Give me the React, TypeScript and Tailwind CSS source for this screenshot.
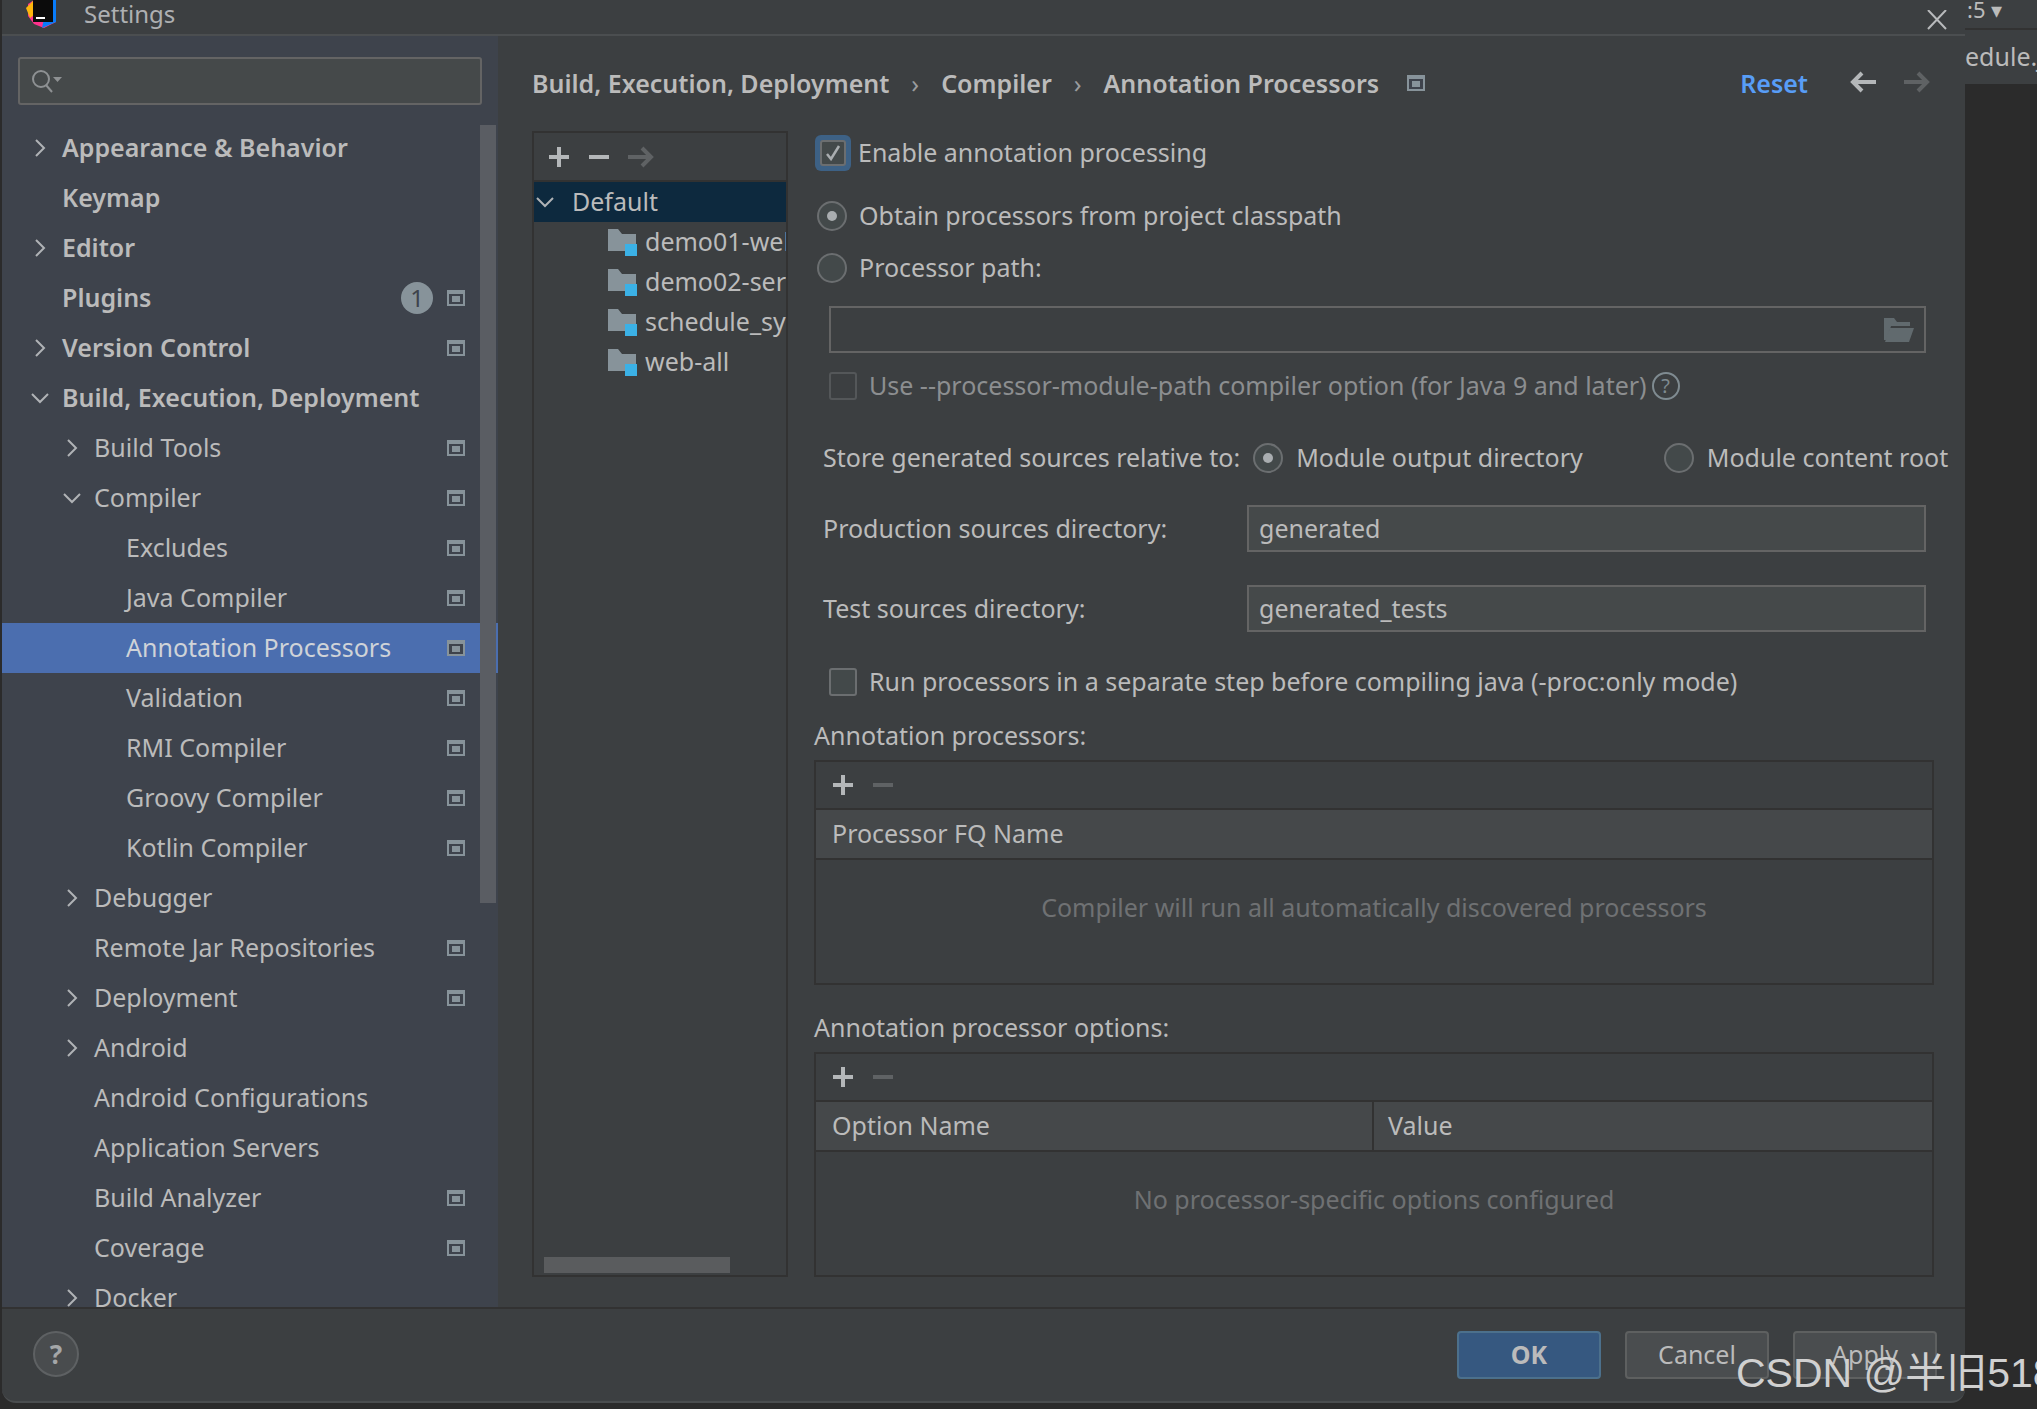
import React from "react";

const font = { fontFamily: '"Noto Sans", "Open Sans", sans-serif' };

function Cfg() {
  return (
    <svg width="18" height="16" viewBox="0 0 18 16" className="shrink-0">
      <rect x="0" y="0" width="18" height="16" fill="#87939a" />
      <rect x="2" y="4" width="14" height="10" fill="#3e434c" />
      <rect x="5" y="6" width="8" height="6" fill="#87939a" />
    </svg>
  );
}

function Chevron({ open }: { open?: boolean }) {
  return (
    <svg width="20" height="20" viewBox="0 0 20 20" fill="none" stroke="#b0b3b6" strokeWidth="2">
      {open ? <path d="M2 6 L10 14 L18 6" /> : <path d="M6 2 L14 10 L6 18" />}
    </svg>
  );
}

type Item = { t: string; d: number; bold?: boolean; c?: "o" | "c"; cfg?: boolean; badge?: boolean; sel?: boolean };
const items: Item[] = [
  { t: "Appearance & Behavior", d: 0, bold: true, c: "c" },
  { t: "Keymap", d: 0, bold: true },
  { t: "Editor", d: 0, bold: true, c: "c" },
  { t: "Plugins", d: 0, bold: true, cfg: true, badge: true },
  { t: "Version Control", d: 0, bold: true, c: "c", cfg: true },
  { t: "Build, Execution, Deployment", d: 0, bold: true, c: "o" },
  { t: "Build Tools", d: 1, c: "c", cfg: true },
  { t: "Compiler", d: 1, c: "o", cfg: true },
  { t: "Excludes", d: 2, cfg: true },
  { t: "Java Compiler", d: 2, cfg: true },
  { t: "Annotation Processors", d: 2, cfg: true, sel: true },
  { t: "Validation", d: 2, cfg: true },
  { t: "RMI Compiler", d: 2, cfg: true },
  { t: "Groovy Compiler", d: 2, cfg: true },
  { t: "Kotlin Compiler", d: 2, cfg: true },
  { t: "Debugger", d: 1, c: "c" },
  { t: "Remote Jar Repositories", d: 1, cfg: true },
  { t: "Deployment", d: 1, c: "c", cfg: true },
  { t: "Android", d: 1, c: "c" },
  { t: "Android Configurations", d: 1 },
  { t: "Application Servers", d: 1 },
  { t: "Build Analyzer", d: 1, cfg: true },
  { t: "Coverage", d: 1, cfg: true },
  { t: "Docker", d: 1, c: "c" },
];

function SideRow({ it }: { it: Item }) {
  const pl = it.d === 0 ? "pl-[60px]" : it.d === 1 ? "pl-[92px]" : "pl-[124px]";
  const cl = it.d === 0 ? "left-[28px]" : "left-[60px]";
  return (
    <div className={`relative flex h-[50px] shrink-0 items-center pr-[33px] ${pl} ${it.sel ? "bg-[#4b6eaf] text-[#cfd3d8]" : ""}`}>
      {it.c && (
        <span className={`absolute top-[15px] ${cl}`}>
          <Chevron open={it.c === "o"} />
        </span>
      )}
      <span className={`flex-1 text-[25px] ${it.bold ? "font-semibold" : ""}`}>{it.t}</span>
      {it.badge && (
        <span className="mr-[14px] flex h-[32px] w-[32px] items-center justify-center rounded-full bg-[#87939a] text-[24px] text-[#3e434c]">1</span>
      )}
      {it.cfg && <Cfg />}
    </div>
  );
}

function Plus({ c = "#b4b7b9" }: { c?: string }) {
  return (
    <svg width="22" height="22" viewBox="0 0 22 22" stroke={c} strokeWidth="4">
      <path d="M11 1 V21 M1 11 H21" />
    </svg>
  );
}
function Minus({ c = "#b4b7b9" }: { c?: string }) {
  return (
    <svg width="22" height="22" viewBox="0 0 22 22" stroke={c} strokeWidth="4">
      <path d="M1 11 H21" />
    </svg>
  );
}
function Arrow({ c, left }: { c: string; left?: boolean }) {
  return (
    <svg width="26" height="22" viewBox="0 0 26 22" fill="none" stroke={c} strokeWidth="4" className={left ? "" : "rotate-180"}>
      <path d="M12 2 L3 11 L12 20 M3 11 H26" />
    </svg>
  );
}

function Folder() {
  return (
    <svg width="31" height="29" viewBox="0 0 31 29" className="shrink-0">
      <path d="M0 1 H10 L14 6 H28 V23 H0 Z" fill="#87939a" />
      <rect x="17" y="16" width="12" height="12" fill="#3bb1e6" stroke="#3c3f41" strokeWidth="0" />
    </svg>
  );
}

function Radio({ on }: { on?: boolean }) {
  return (
    <span className="flex h-[30px] w-[30px] shrink-0 items-center justify-center rounded-full border-2 border-[#6b6e70] bg-[#43494a]">
      {on && <span className="h-[10px] w-[10px] rounded-full bg-[#a9adb0]" />}
    </span>
  );
}

function Box({ dim }: { dim?: boolean }) {
  return <span className={`h-[28px] w-[28px] shrink-0 rounded-[3px] border-2 ${dim ? "border-[#545759]" : "border-[#6b6e70] bg-[#43494a]"}`} />;
}

function Field({ v }: { v: string }) {
  return <div className="flex h-[47px] flex-1 items-center border-2 border-[#646464] bg-[#45494a] pl-[10px] text-[25px]">{v}</div>;
}

function TableBox({ children, empty }: { children: React.ReactNode; empty: string }) {
  return (
    <div className="mt-[9px] flex h-[225px] w-[1120px] flex-col border-2 border-[#323232]">
      <div className="flex h-[48px] shrink-0 items-center gap-[18px] border-b-2 border-[#323232] pl-[16px]">
        <Plus />
        <Minus c="#5f6264" />
      </div>
      <div className="flex h-[50px] shrink-0 items-center border-b-2 border-[#323232] bg-[#45484a] text-[25px]">{children}</div>
      <div className="flex flex-1 items-center justify-center pb-[28px] text-[25px] text-[#6f7173]">{empty}</div>
    </div>
  );
}

export default function App() {
  return (
    <div className="relative flex h-[1409px] w-[2037px] overflow-hidden bg-[#2b2b2b] text-[#bbbbbb]" style={font}>
      {/* Settings dialog */}
      <div className="mb-[6px] ml-[2px] flex w-[1963px] flex-col overflow-hidden rounded-b-[14px] border-b-2 border-[#4a4d4f] bg-[#3c3f41]">
        <div className="flex h-[36px] shrink-0 items-end border-b-2 border-[#4b4e50] pb-[6px] pl-[24px]">
          <svg width="32" height="36" viewBox="0 0 32 36" className="mb-[-6px] shrink-0">
            <path d="M2 6 L8 2 L26 2 L30 4 L30 24 L18 30 L8 26 L2 18 Z" fill="#ff318c" />
            <path d="M16 30 L30 24 L30 2 L22 2 Z" fill="#087cfa" />
            <path d="M0 10 L8 2 L12 14 L4 20 Z" fill="#fdb60d" />
            <rect x="7" y="0" width="20" height="24" fill="#0b0b0b" />
            <rect x="10" y="19" width="9" height="2" fill="#ffffff" />
          </svg>
          <span className="ml-[26px] text-[24px] leading-[28px] text-[#aeb0b2]">Settings</span>
          <span className="flex-1" />
          <svg width="20" height="20" viewBox="0 0 20 20" stroke="#b8babc" strokeWidth="2" className="mr-[18px] mb-[-2px]">
            <path d="M1 0 L19 19 M19 0 L1 19" />
          </svg>
        </div>

        <div className="flex min-h-0 flex-1">
          {/* Sidebar */}
          <div className="relative flex w-[496px] shrink-0 flex-col overflow-hidden bg-[#3e434c]">
            <div className="mx-[16px] mt-[21px] flex h-[48px] shrink-0 items-center rounded-[3px] border-2 border-[#646464] bg-[#45494a] pl-[10px]">
              <svg width="32" height="24" viewBox="0 0 32 24" fill="none" stroke="#8e9193" strokeWidth="2">
                <circle cx="11" cy="10" r="8" />
                <path d="M16 16 L22 23" />
                <path d="M23 8 H32 L27.5 13 Z" fill="#8e9193" stroke="none" />
              </svg>
            </div>
            <div className="mt-[18px] flex flex-col">
              {items.map((it) => (
                <SideRow key={it.t} it={it} />
              ))}
            </div>
            <div className="absolute left-[478px] top-[89px] h-[778px] w-[16px] bg-[#5a5d63]" />
          </div>

          {/* Content */}
          <div className="flex min-w-0 flex-1 flex-col pl-[34px]">
            <div className="flex h-[95px] shrink-0 items-start pt-[29px] pr-[35px] text-[25px]">
              <span className="font-semibold">Build, Execution, Deployment</span>
              <span className="mx-[22px] text-[#9a9c9e]">›</span>
              <span className="font-semibold">Compiler</span>
              <span className="mx-[22px] text-[#9a9c9e]">›</span>
              <span className="font-semibold">Annotation Processors</span>
              <span className="ml-[28px] mt-[10px]">
                <Cfg />
              </span>
              <span className="flex-1" />
              <span className="font-semibold text-[#589df6]">Reset</span>
              <span className="ml-[42px] mt-[6px]">
                <Arrow c="#b4b7b9" left />
              </span>
              <span className="ml-[28px] mt-[6px]">
                <Arrow c="#5f6264" />
              </span>
            </div>

            <div className="flex min-h-0 flex-1">
              {/* Tree */}
              <div className="relative flex h-[1146px] w-[256px] shrink-0 flex-col overflow-hidden border-2 border-[#323232]">
                <div className="flex h-[49px] shrink-0 items-center gap-[18px] border-b-2 border-[#323232] pl-[14px]">
                  <Plus />
                  <Minus />
                  <Arrow c="#5f6264" />
                </div>
                <div className="relative flex h-[40px] shrink-0 items-center bg-[#0d293e] pl-[38px] text-[25px]">
                  <span className="absolute left-[1px] top-[10px]">
                    <Chevron open />
                  </span>
                  Default
                </div>
                <div className="flex flex-col">
                  {["demo01-web", "demo02-service", "schedule_system", "web-all"].map((n) => (
                    <div key={n} className="flex h-[40px] shrink-0 items-center pl-[74px] text-[25px] whitespace-nowrap">
                      <Folder />
                      <span className="ml-[6px]">{n}</span>
                    </div>
                  ))}
                </div>
                <div className="absolute bottom-[2px] left-[10px] h-[16px] w-[186px] bg-[#5a5c5e]" />
              </div>

              {/* Form */}
              <div className="ml-[26px] flex min-w-0 flex-1 flex-col text-[25px]">
                <div className="mt-[4px] flex h-[36px] items-center">
                  <span className="ml-[1px] flex h-[36px] w-[36px] items-center justify-center rounded-[6px] bg-[#3d6185]">
                    <span className="flex h-[26px] w-[26px] items-center justify-center rounded-[3px] border-2 border-[#6b6e70] bg-[#43494a]">
                      <svg width="16" height="16" viewBox="0 0 16 16" fill="none" stroke="#a9adb0" strokeWidth="2.5">
                        <path d="M2 9 L6 14 L14 1" />
                      </svg>
                    </span>
                  </span>
                  <span className="ml-[7px]">Enable annotation processing</span>
                </div>
                <div className="mt-[30px] flex h-[30px] items-center pl-[3px]">
                  <Radio on />
                  <span className="ml-[12px]">Obtain processors from project classpath</span>
                </div>
                <div className="mt-[22px] flex h-[30px] items-center pl-[3px]">
                  <Radio />
                  <span className="ml-[12px]">Processor path:</span>
                </div>
                <div className="ml-[15px] mt-[23px] flex h-[47px] w-[1097px] items-center justify-end border-2 border-[#646464] pr-[10px]">
                  <svg width="30" height="24" viewBox="0 0 30 24">
                    <path d="M0 0 H10 L13 4 H26 V8 H7 L3 22 H0 Z" fill="#616a6e" />
                    <path d="M6 10 H30 L25 24 H1 Z" fill="#616a6e" />
                  </svg>
                </div>
                <div className="ml-[15px] mt-[18px] flex h-[30px] items-center text-[#8c8e90]">
                  <Box dim />
                  <span className="ml-[12px]">Use --processor-module-path compiler option (for Java 9 and later)</span>
                  <span className="ml-[5px] flex h-[28px] w-[28px] items-center justify-center rounded-full border-2 border-[#7f8b91] text-[20px] text-[#7f8b91]">?</span>
                </div>
                <div className="mt-[42px] flex h-[30px] items-center pl-[9px]">
                  <span>Store generated sources relative to:</span>
                  <span className="ml-[13px]">
                    <Radio on />
                  </span>
                  <span className="ml-[13px]">Module output directory</span>
                  <span className="ml-[81px]">
                    <Radio />
                  </span>
                  <span className="ml-[13px]">Module content root</span>
                </div>
                <div className="mt-[32px] flex w-[1112px] items-center pl-[9px]">
                  <span className="w-[424px] shrink-0">Production sources directory:</span>
                  <Field v="generated" />
                </div>
                <div className="mt-[33px] flex w-[1112px] items-center pl-[9px]">
                  <span className="w-[424px] shrink-0">Test sources directory:</span>
                  <Field v="generated_tests" />
                </div>
                <div className="ml-[15px] mt-[35px] flex h-[30px] items-center">
                  <Box />
                  <span className="ml-[12px]">Run processors in a separate step before compiling java (-proc:only mode)</span>
                </div>
                <div className="mt-[24px] flex h-[30px] items-center">Annotation processors:</div>
                <TableBox empty="Compiler will run all automatically discovered processors">
                  <span className="pl-[16px]">Processor FQ Name</span>
                </TableBox>
                <div className="mt-[28px] flex h-[30px] items-center">Annotation processor options:</div>
                <TableBox empty="No processor-specific options configured">
                  <span className="flex h-full w-[558px] items-center border-r-2 border-[#323232] pl-[16px]">Option Name</span>
                  <span className="pl-[14px]">Value</span>
                </TableBox>
              </div>
            </div>
          </div>
        </div>

        {/* Footer */}
        <div className="flex h-[94px] shrink-0 items-start border-t-2 border-[#323232] pt-[22px]">
          <span className="ml-[31px] flex h-[46px] w-[46px] items-center justify-center rounded-full border-2 border-[#5e6163] bg-[#494c4e] text-[26px] font-bold text-[#a4a6a8]">?</span>
          <span className="flex-1" />
          <span className="flex h-[48px] w-[144px] items-center justify-center rounded-[4px] border-2 border-[#4c708c] bg-[#365880] text-[25px] font-bold">OK</span>
          <span className="ml-[24px] flex h-[48px] w-[144px] items-center justify-center rounded-[4px] border-2 border-[#5e6060] bg-[#4a4d4f] text-[25px]">Cancel</span>
          <span className="ml-[24px] mr-[28px] flex h-[48px] w-[144px] items-center justify-center rounded-[4px] border-2 border-[#5e6060] bg-[#4a4d4f] text-[25px]">Apply</span>
        </div>
      </div>

      {/* Editor behind */}
      <div className="flex min-w-0 flex-1 flex-col bg-[#2b2b2b]">
        <div className="flex h-[30px] shrink-0 items-start overflow-hidden border-b-2 border-[#323232] bg-[#3c3f41] pl-[2px] text-[22px] leading-[18px]">:5 ▾</div>
        <div className="flex h-[54px] shrink-0 items-center overflow-hidden whitespace-nowrap bg-[#3c3f41] text-[25px] text-[#bbbbbb]">edule.ja</div>
      </div>

      {/* Watermark */}
      <span
        className="absolute left-[1736px] top-[1349px] whitespace-nowrap text-[41px] leading-[48px] text-[#d0d0d0]"
        style={{ fontFamily: '"Liberation Sans", "Noto Sans CJK SC", sans-serif' }}
      >
        CSDN @半旧518
      </span>
    </div>
  );
}
